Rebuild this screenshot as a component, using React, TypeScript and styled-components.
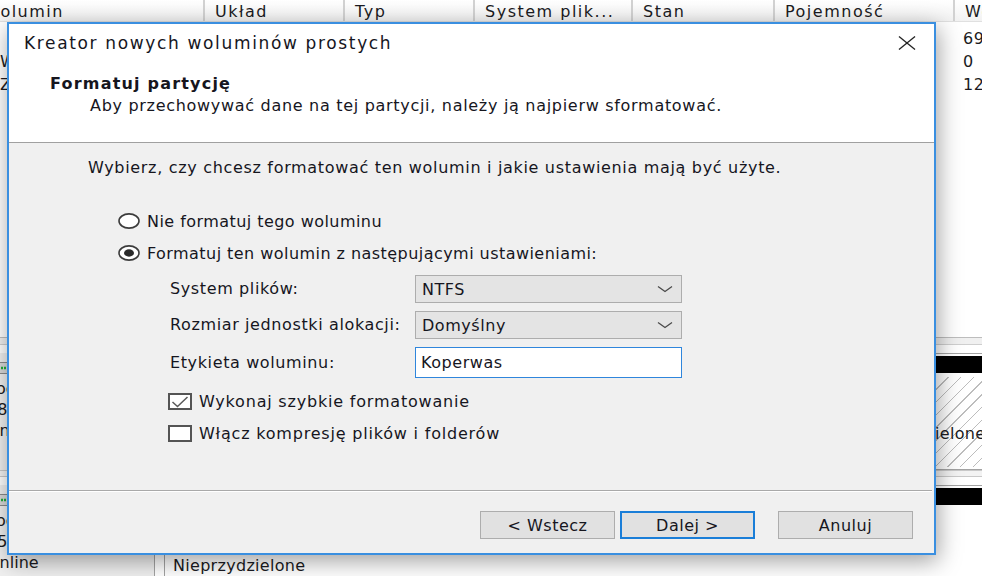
import React from 'react';
import styled, { createGlobalStyle } from 'styled-components';

const GlobalStyle = createGlobalStyle`
  html, body { margin: 0; padding: 0; width: 982px; height: 576px; overflow: hidden; background: #fff; }
  #root { width: 982px; height: 576px; }
  * { box-sizing: border-box; }
`;

const Screen = styled.div`
  position: relative;
  width: 982px;
  height: 576px;
  overflow: hidden;
  background: #fff;
  font-family: "DejaVu Sans", Verdana, sans-serif;
  font-size: 16px;
  color: #1b1b22;
  display: flex;
  flex-direction: column;
`;

/* ---------- background: disk management ---------- */

const TopPane = styled.div`
  height: 337px;
  flex: none;
  display: flex;
  flex-direction: column;
  background: #fff;
`;

const ListHeader = styled.div`
  display: flex;
  height: 22px;
  margin-left: -26px;
  background: linear-gradient(#ffffff, #f2f2f2);
  border-bottom: 1px solid #e0e0e0;
`;

const HeaderCell = styled.div<{ $w: number }>`
  flex: none;
  width: ${p => p.$w}px;
  padding: 2px 0 0 10px;
  line-height: 20px;
  letter-spacing: 1.5px;
  white-space: nowrap;
  overflow: hidden;
  border-right: 2px solid #d2d2d2;
`;

const ListRows = styled.div`
  display: flex;
  flex-direction: column;
  padding-top: 5px;
  margin-left: -26px;
`;

const ListRow = styled.div`
  display: flex;
  height: 23px;
  line-height: 23px;
`;

const RowCell = styled.div<{ $w: number }>`
  flex: none;
  width: ${p => p.$w}px;
  padding-left: ${p => (p.$w > 200 ? 26 : 8)}px;
  white-space: nowrap;
  overflow: hidden;
  letter-spacing: 0.6px;
`;

const Splitter = styled.div`
  height: 8px;
  flex: none;
  background: #f0f0f0;
  border-top: 1px solid #bdbdbd;
  border-bottom: 1px solid #cfcfcf;
`;

const DiskPane = styled.div`
  flex: 1;
  display: flex;
  flex-direction: column;
  background: #fff;
`;

const DiskRow = styled.div<{ $h: number }>`
  display: flex;
  height: ${p => p.$h}px;
  flex: none;
  padding-top: 8px;
  column-gap: 9px;
`;

const PartitionStrip = styled.div`
  flex: 1;
  display: flex;
  margin-right: -6px;
`;

const DiskGap = styled.div`
  height: 7px;
  flex: none;
  background: #f3f3f3;
  border-top: 1px solid #c9c9c9;
  border-bottom: 1px solid #c9c9c9;
`;

const DiskLabel = styled.div`
  width: 155px;
  flex: none;
  background: #f0f0f0;
  border-right: 1px solid #a3a3a3;
  padding-top: 4px;
  display: flex;
  flex-direction: column;
  overflow: hidden;
`;

const LabelLine = styled.div`
  margin-left: -13px;
  line-height: 21px;
  white-space: nowrap;
  display: flex;
  align-items: center;
  gap: 4px;
`;

const Partition = styled.div<{ $w?: number }>`
  flex: ${p => (p.$w ? `none` : '1')};
  width: ${p => (p.$w ? `${p.$w}px` : 'auto')};
  border: 1px solid #a3a3a3;
  padding: 2px 3px;
  display: flex;
  flex-direction: column;
  overflow: hidden;
`;

const PartitionBar = styled.div<{ $color?: string }>`
  height: 17px;
  flex: none;
  background: ${p => p.$color ?? '#000'};
`;

const PartitionBody = styled.div<{ $selected?: boolean }>`
  flex: 1;
  margin-top: 4px;
  padding: 30px 0 0 5px;
  line-height: 18px;
  white-space: nowrap;
  letter-spacing: 0.3px;
  background: ${p =>
    p.$selected
      ? 'repeating-linear-gradient(-45deg, #ffffff 0px, #ffffff 8px, #bdbdbd 8px, #bdbdbd 9px)'
      : '#fff'};
`;

/* ---------- dialog ---------- */

const Dialog = styled.div`
  position: absolute;
  left: 7px;
  top: 22px;
  width: 929px;
  height: 533px;
  border: 2px solid #3a8fe0;
  background: #f0f0f0;
  box-shadow: 2px 6px 22px rgba(0, 0, 0, 0.38);
  display: flex;
  flex-direction: column;
  color: #16161e;
`;

const TitleBar = styled.div`
  height: 38px;
  flex: none;
  background: #fff;
  display: flex;
  align-items: center;
  justify-content: space-between;
  padding: 0 18px 0 15px;
`;

const TitleText = styled.div`
  font-size: 17px;
  letter-spacing: 1.65px;
  line-height: 20px;
`;

const CloseButton = styled.div`
  width: 18px;
  height: 14px;
  display: flex;
`;

const WizardHeader = styled.div`
  height: 81px;
  flex: none;
  background: #fff;
  border-bottom: 1px solid #a0a0a0;
  padding: 12px 0 0 41px;
`;

const HeaderTitle = styled.div`
  font-weight: bold;
  line-height: 20px;
  letter-spacing: 1.2px;
`;

const HeaderSub = styled.div`
  margin: 2px 0 0 40px;
  line-height: 20px;
  letter-spacing: 0.7px;
`;

const WizardBody = styled.div`
  flex: 1;
  display: flex;
  flex-direction: column;
  padding-top: 15px;
  letter-spacing: 0.55px;
`;

const Intro = styled.div`
  margin-left: 79px;
  line-height: 20px;
  letter-spacing: 0.68px;
`;

const RadioGroup = styled.div`
  margin: 33px 0 0 109px;
  display: flex;
  flex-direction: column;
  row-gap: 12px;
`;

const OptionRow = styled.div`
  display: flex;
  align-items: center;
  height: 20px;
  column-gap: 7px;
  white-space: nowrap;
  letter-spacing: 0.45px;
`;

const FormGrid = styled.div`
  margin: 12px 0 0 161px;
  display: grid;
  grid-template-columns: 245px 267px;
  grid-template-rows: 28px 28px 31px;
  row-gap: 8px;
  align-items: center;
`;

const FieldLabel = styled.div`
  line-height: 20px;
  white-space: nowrap;
  letter-spacing: 0.62px;
`;

const Select = styled.div`
  height: 28px;
  background: #e4e4e4;
  border: 1px solid #adadad;
  display: flex;
  align-items: center;
  justify-content: space-between;
  padding: 0 8px 0 6px;
`;

const TextInput = styled.input`
  height: 31px;
  width: 267px;
  margin: 0;
  background: #fff;
  border: 1px solid #2f86dc;
  outline: none;
  padding: 0 5px;
  font: inherit;
  letter-spacing: inherit;
  color: inherit;
`;

const CheckGroup = styled.div`
  margin: 15px 0 0 159px;
  display: flex;
  flex-direction: column;
  row-gap: 15px;
`;

const CheckRow = styled.div`
  display: flex;
  align-items: center;
  height: 17px;
  column-gap: 7px;
  white-space: nowrap;
  letter-spacing: 0.8px;
`;

const CheckBox = styled.span`
  width: 24px;
  height: 17px;
  flex: none;
  background: #fff;
  border: 2px solid #545454;
  display: flex;
  align-items: center;
  justify-content: center;
`;

const Divider = styled.div`
  height: 2px;
  flex: none;
  margin-right: 2px;
  border-top: 1px solid #a9a9a9;
  border-bottom: 1px solid #fff;
`;

const Footer = styled.div`
  height: 61px;
  flex: none;
  display: flex;
  justify-content: flex-end;
  align-items: flex-start;
  padding: 19px 21px 0 0;
`;

const Button = styled.div<{ $primary?: boolean; $gap?: number }>`
  width: 135px;
  height: 28px;
  margin-left: ${p => p.$gap ?? 0}px;
  background: #e1e1e1;
  border: ${p => (p.$primary ? '2px solid #1a7ed8' : '1px solid #adadad')};
  display: flex;
  align-items: center;
  justify-content: center;
  letter-spacing: 0.5px;
`;

const Radio: React.FC<{ checked?: boolean }> = ({ checked }) => (
  <svg width="22" height="16" viewBox="0 0 22 16">
    <ellipse cx="11" cy="8" rx="10" ry="7.1" fill="#fff" stroke="#3c3c3c" strokeWidth="1.6" />
    {checked && <ellipse cx="11" cy="8" rx="5" ry="3.7" fill="#2a2a2a" />}
  </svg>
);

const Chevron = () => (
  <svg width="16" height="8" viewBox="0 0 16 8">
    <polyline points="1,1.5 8,6.5 15,1.5" fill="none" stroke="#4a4a4a" strokeWidth="1.3" />
  </svg>
);

const DiskIcon = () => (
  <svg width="22" height="12" viewBox="0 0 22 12">
    <rect x="0.5" y="0.5" width="21" height="11" fill="#d9d9d9" stroke="#8a8a8a" />
    <line x1="2" y1="6" x2="20" y2="6" stroke="#1fae3a" strokeWidth="2.5" strokeDasharray="2 1" />
  </svg>
);

const widths = [231, 140, 130, 158, 142, 180, 120];
const headers = ['Wolumin', 'Układ', 'Typ', 'System plik...', 'Stan', 'Pojemność', 'Wolne miejsce'];
const rows = [
  ['', 'Prosty', 'Podstawowy', 'NTFS', 'Zdrowy (Rozruch)', '698,63 GB', '69,52 GB'],
  ['Wolumin', 'Prosty', 'Podstawowy', '', 'Zdrowy (Partycja)', '450 MB', '0'],
  ['Zarezerwowane', 'Prosty', 'Podstawowy', 'NTFS', 'Zdrowy (System)', '500 MB', '12,4 MB'],
];

export default function App() {
  return (
    <Screen>
      <GlobalStyle />
      <TopPane>
        <ListHeader>
          {headers.map((h, i) => (
            <HeaderCell key={h} $w={widths[i]}>{h}</HeaderCell>
          ))}
        </ListHeader>
        <ListRows>
          {rows.map((r, ri) => (
            <ListRow key={ri}>
              {r.map((c, ci) => (
                <RowCell key={ci} $w={widths[ci]}>{c}</RowCell>
              ))}
            </ListRow>
          ))}
        </ListRows>
      </TopPane>
      <Splitter />
      <DiskPane>
        <DiskRow $h={125}>
          <DiskLabel>
            <LabelLine><DiskIcon />Dysk 0</LabelLine>
            <LabelLine>Podstawowy</LabelLine>
            <LabelLine>18,00 GB</LabelLine>
            <LabelLine>Online</LabelLine>
          </DiskLabel>
          <PartitionStrip>
            <Partition $w={680}>
              <PartitionBar $color="#00008b" />
              <PartitionBody>
                <div>(C:)</div>
                <div>NTFS</div>
              </PartitionBody>
            </Partition>
            <Partition>
              <PartitionBar />
              <PartitionBody $selected>
                <div>2,00 GB</div>
                <div>Nieprzydzielone</div>
              </PartitionBody>
            </Partition>
          </PartitionStrip>
        </DiskRow>
        <DiskGap />
        <DiskRow $h={120}>
          <DiskLabel>
            <LabelLine><DiskIcon />Dysk 1</LabelLine>
            <LabelLine>Podstawowy</LabelLine>
            <LabelLine>15,00 GB</LabelLine>
            <LabelLine>Online</LabelLine>
          </DiskLabel>
          <PartitionStrip>
            <Partition>
              <PartitionBar />
              <PartitionBody>
                <div>15,00 GB</div>
                <div>Nieprzydzielone</div>
              </PartitionBody>
            </Partition>
          </PartitionStrip>
        </DiskRow>
      </DiskPane>

      <Dialog>
        <TitleBar>
          <TitleText>Kreator nowych woluminów prostych</TitleText>
          <CloseButton>
            <svg width="18" height="14" viewBox="0 0 18 14">
              <line x1="1" y1="0.5" x2="17" y2="13.5" stroke="#222" strokeWidth="1.3" />
              <line x1="17" y1="0.5" x2="1" y2="13.5" stroke="#222" strokeWidth="1.3" />
            </svg>
          </CloseButton>
        </TitleBar>
        <WizardHeader>
          <HeaderTitle>Formatuj partycję</HeaderTitle>
          <HeaderSub>Aby przechowywać dane na tej partycji, należy ją najpierw sformatować.</HeaderSub>
        </WizardHeader>
        <WizardBody>
          <Intro>Wybierz, czy chcesz formatować ten wolumin i jakie ustawienia mają być użyte.</Intro>
          <RadioGroup>
            <OptionRow><Radio />Nie formatuj tego woluminu</OptionRow>
            <OptionRow><Radio checked />Formatuj ten wolumin z następującymi ustawieniami:</OptionRow>
          </RadioGroup>
          <FormGrid>
            <FieldLabel>System plików:</FieldLabel>
            <Select><span>NTFS</span><Chevron /></Select>
            <FieldLabel>Rozmiar jednostki alokacji:</FieldLabel>
            <Select><span>Domyślny</span><Chevron /></Select>
            <FieldLabel>Etykieta woluminu:</FieldLabel>
            <TextInput defaultValue="Koperwas" />
          </FormGrid>
          <CheckGroup>
            <CheckRow>
              <CheckBox>
                <svg width="18" height="12" viewBox="0 0 18 12">
                  <polyline points="1.5,6 6.5,10.5 16.5,1" fill="none" stroke="#5a5a5a" strokeWidth="1.5" />
                </svg>
              </CheckBox>
              Wykonaj szybkie formatowanie
            </CheckRow>
            <CheckRow>
              <CheckBox />
              Włącz kompresję plików i folderów
            </CheckRow>
          </CheckGroup>
        </WizardBody>
        <Divider />
        <Footer>
          <Button>&lt; Wstecz</Button>
          <Button $primary $gap={5}>Dalej &gt;</Button>
          <Button $gap={23}>Anuluj</Button>
        </Footer>
      </Dialog>
    </Screen>
  );
}
